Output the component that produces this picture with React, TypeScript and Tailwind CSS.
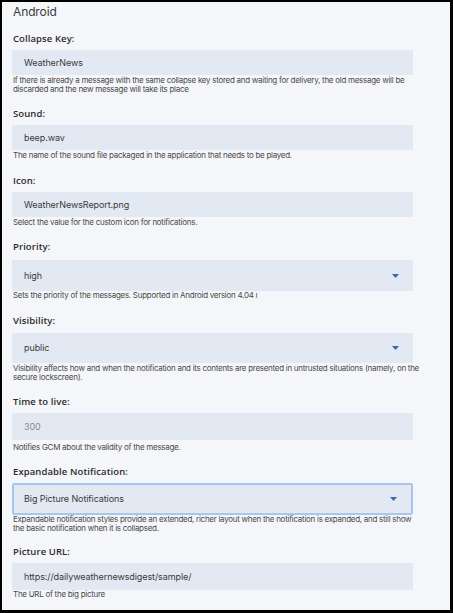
import React from "react"

type Field = {
  label: string
  value: string
  help: string
  select?: boolean
  muted?: boolean
  focused?: boolean
  labelClass: string
  boxClass: string
  helpClass: string
}

const fields: Field[] = [
  {
    label: "Collapse Key:",
    value: "WeatherNews",
    help: "If there is already a message with the same collapse key stored and waiting for delivery, the old message will be discarded and the new message will take its place",
    labelClass: "mt-[13px]",
    boxClass: "mt-[5px] h-[25px]",
    helpClass: "mt-px",
  },
  {
    label: "Sound:",
    value: "beep.wav",
    help: "The name of the sound file packaged in the application that needs to be played.",
    labelClass: "mt-[14px]",
    boxClass: "mt-[5px] h-[25px]",
    helpClass: "mt-px",
  },
  {
    label: "Icon:",
    value: "WeatherNewsReport.png",
    help: "Select the value for the custom icon for notifications.",
    labelClass: "mt-[15px]",
    boxClass: "mt-[5px] h-[25px]",
    helpClass: "mt-px",
  },
  {
    label: "Priority:",
    value: "high",
    select: true,
    help: "Sets the priority of the messages. Supported in Android version 4.04 \u0131",
    labelClass: "mt-[14px]",
    boxClass: "mt-[7px] h-[31px]",
    helpClass: "mt-0",
  },
  {
    label: "Visibility:",
    value: "public",
    select: true,
    help: "Visibility affects how and when the notification and its contents are presented in untrusted situations (namely, on the secure lockscreen).",
    labelClass: "mt-[15px]",
    boxClass: "mt-[6px] h-[30px]",
    helpClass: "mt-px",
  },
  {
    label: "Time to live:",
    value: "300",
    muted: true,
    help: "Notifies GCM about the validity of the message.",
    labelClass: "mt-[14px]",
    boxClass: "mt-[5px] h-[27px]",
    helpClass: "mt-[3px]",
  },
  {
    label: "Expandable Notification:",
    value: "Big Picture Notifications",
    select: true,
    focused: true,
    help: "Expandable notification styles provide an extended, richer layout when the notification is expanded, and still show the basic notification when it is collapsed.",
    labelClass: "mt-[14px]",
    boxClass: "mt-[5px] h-[32px]",
    helpClass: "mt-0",
  },
  {
    label: "Picture URL:",
    value: "https://dailyweathernewsdigest/sample/",
    help: "The URL of the big picture",
    labelClass: "mt-[13px]",
    boxClass: "mt-[5px] h-[27px]",
    helpClass: "mt-0",
  },
]

// little filled caret used by the select boxes
function Caret() {
  return (
    <svg width="7" height="4" viewBox="0 0 7 4" className="mr-[2px] shrink-0">
      <path d="M0 0h7L3.5 4z" fill="#4066ab" />
    </svg>
  )
}

export default function App() {
  return (
    <div
      className="h-[613px] w-[453px] border-t-2 border-l-2 border-r-[3px] border-b-[3px] border-black bg-[#f5f6f9] text-[#333]"
      style={{ fontFamily: "Inter, 'Liberation Sans', sans-serif" }}
    >
      <div className="h-full pl-[10px] pt-[2px]">
        <h2 className="pl-px text-[12px] leading-[16px] tracking-[-0.01em] text-[#3a3a3a]">Android</h2>

        {fields.map((f) => (
          <div key={f.label} className="flex w-[401px] flex-col">
            <label
              className={`pl-px text-[9.5px] font-semibold leading-[12px] tracking-[0.01em] text-[#2b2b2b] ${f.labelClass}`}
              style={{ fontFamily: "'Open Sans', Inter, sans-serif" }}
            >
              {f.label}
            </label>
            <div
              className={`flex items-center justify-between bg-[#e3e9f3] pl-3 pr-3 text-[9px] tracking-[-0.01em] ${f.boxClass} ${
                f.focused ? "rounded-[2px] border-2 border-[#a9c6f3] pl-[10px]" : ""
              } ${f.muted ? "text-[#8a8a8a]" : "text-[#3a3a3a]"}`}
            >
              <span>{f.value}</span>
              {f.select && <Caret />}
            </div>
            <p className={`w-[410px] pl-px text-[8px] leading-[9px] tracking-[-0.035em] text-[#4a4a4a] ${f.helpClass}`}>
              {f.help}
            </p>
          </div>
        ))}
      </div>
    </div>
  )
}
